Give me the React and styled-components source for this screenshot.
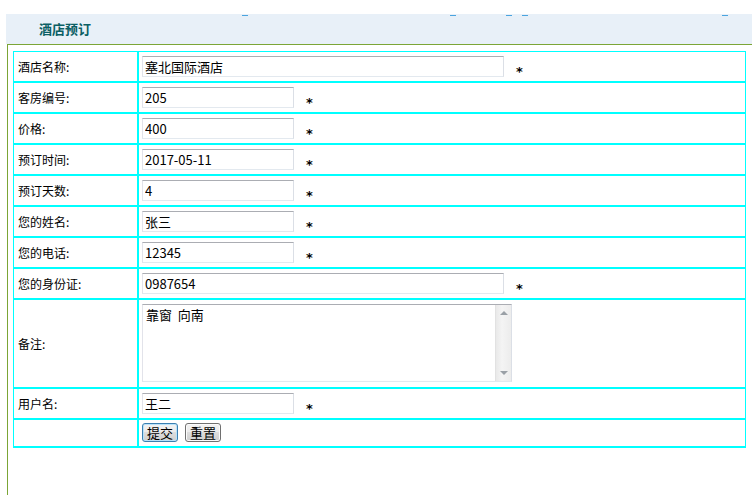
import React from "react";
import styled, { createGlobalStyle } from "styled-components";

const GlobalStyle = createGlobalStyle`
  html, body { margin: 0; padding: 0; background: #ffffff; }
  body { font-family: "Noto Sans CJK SC", "Noto Sans", sans-serif; color: #000; }
`;

const Page = styled.div`
  padding: 14px 0 0 6px;
  width: 746px;
`;

const Header = styled.div`
  position: relative;
  height: 30px;
  background: #e8f0f8;
  display: flex;
  align-items: center;
  padding-left: 33px;
  box-sizing: border-box;
`;

const Tick = styled.span`
  position: absolute;
  top: 1px;
  width: 6px;
  height: 1px;
  background: #4ba4df;
`;

const Title = styled.h1`
  margin: 0;
  font-size: 13px;
  font-weight: bold;
  line-height: 16px;
  color: #0b5f64;
`;

const Panel = styled.div`
  margin-left: 1px;
  border-top: 1px solid #7ba536;
  border-left: 1px solid #7ba536;
  padding: 6px 0 0 5px;
  min-height: 460px;
  box-sizing: border-box;
`;

const Table = styled.table`
  width: 733px;
  border-collapse: separate;
  border-spacing: 0;
  border: 1px solid #00ffff;
  table-layout: fixed;
`;

const LabelCell = styled.td`
  width: 119px;
  height: ${(p) => p.$h}px;
  padding: 0 0 0 4px;
  border-right: 2px solid #00ffff;
  border-bottom: ${(p) => (p.$last ? "1px" : "2px")} solid #00ffff;
  font-size: 12px;
  line-height: 14px;
  vertical-align: middle;
  white-space: nowrap;
`;

const ValueCell = styled.td`
  height: ${(p) => p.$h}px;
  padding: 0 0 0 3px;
  border-bottom: ${(p) => (p.$last ? "1px" : "2px")} solid #00ffff;
  vertical-align: top;
`;

const Field = styled.div`
  display: flex;
  align-items: flex-start;
  padding-top: 4px;
`;

const TextInput = styled.input`
  box-sizing: border-box;
  width: ${(p) => p.$w}px;
  height: 21px;
  margin: 0;
  padding: 0 2px;
  border: 1px solid;
  border-color: #abadb3 #dbdfe6 #e3e9ef #e2e3ea;
  font-family: "Noto Sans CJK SC", sans-serif;
  font-size: 13px;
  line-height: 19px;
  color: #000;
  background: #fff;
  outline: none;
`;

const Star = styled.span`
  margin: 10px 0 0 12px;
  font-family: "DejaVu Sans", sans-serif;
  font-size: 13px;
  line-height: 12px;
  font-weight: bold;
`;

const AreaBox = styled.div`
  margin-top: 4px;
  width: 370px;
  height: 78px;
  box-sizing: border-box;
  display: flex;
  border: 1px solid;
  border-color: #abadb3 #dbdfe6 #e3e9ef #e2e3ea;
`;

const Area = styled.textarea`
  flex: 1;
  margin: 0;
  padding: 2px 3px;
  border: none;
  resize: none;
  outline: none;
  overflow: hidden;
  font-family: "Noto Sans CJK SC", sans-serif;
  font-size: 13px;
  line-height: 16px;
  color: #000;
  white-space: pre-wrap;
`;

const ScrollTrack = styled.div`
  width: 16px;
  background: linear-gradient(to right, #e9e9e9, #f4f4f4 40%, #ececec);
  border-left: 1px solid #e2e2e2;
  display: flex;
  flex-direction: column;
  justify-content: space-between;
  align-items: center;
  padding: 6px 0;
  box-sizing: border-box;
`;

const Arrow = styled.span`
  width: 0;
  height: 0;
  border-left: 4px solid transparent;
  border-right: 4px solid transparent;
  ${(p) =>
    p.$up
      ? "border-bottom: 4px solid #9aa0a6;"
      : "border-top: 4px solid #9aa0a6;"}
`;

const ButtonRow = styled.div`
  display: flex;
  gap: 7px;
  padding-top: 3px;
`;

const Button = styled.button`
  height: 19px;
  margin: 0;
  padding: 0 4px;
  box-sizing: border-box;
  border: 1px solid ${(p) => (p.$focus ? "#3c7fb1" : "#707070")};
  border-radius: 3px;
  background: linear-gradient(#f2f2f2, #ebebeb 50%, #dddddd 50%, #cfcfcf);
  box-shadow: ${(p) => (p.$focus ? "inset 0 0 0 1px #b8e2fa" : "inset 0 0 0 1px #fbfbfb")};
  font-family: "Noto Sans CJK SC", sans-serif;
  font-size: 13px;
  line-height: 15px;
  color: #000;
`;

const rows = [
  { label: "酒店名称:", value: "塞北国际酒店", w: 362 },
  { label: "客房编号:", value: "205", w: 152 },
  { label: "价格:", value: "400", w: 152 },
  { label: "预订时间:", value: "2017-05-11", w: 152 },
  { label: "预订天数:", value: "4", w: 152 },
  { label: "您的姓名:", value: "张三", w: 152 },
  { label: "您的电话:", value: "12345", w: 152 },
  { label: "您的身份证:", value: "0987654", w: 362 },
];

export default function App() {
  return (
    <>
      <GlobalStyle />
      <Page>
        <Header>
          {[236, 444, 500, 516, 716].map((x) => (
            <Tick key={x} style={{ left: x }} />
          ))}
          <Title>酒店预订</Title>
        </Header>
        <Panel>
          <Table>
            <tbody>
              {rows.map((r) => (
                <tr key={r.label}>
                  <LabelCell $h={29}>{r.label}</LabelCell>
                  <ValueCell $h={29}>
                    <Field>
                      <TextInput $w={r.w} defaultValue={r.value} />
                      <Star>*</Star>
                    </Field>
                  </ValueCell>
                </tr>
              ))}
              <tr>
                <LabelCell $h={87}>备注:</LabelCell>
                <ValueCell $h={87}>
                  <AreaBox>
                    <Area defaultValue={"靠窗  向南"} />
                    <ScrollTrack>
                      <Arrow $up />
                      <Arrow />
                    </ScrollTrack>
                  </AreaBox>
                </ValueCell>
              </tr>
              <tr>
                <LabelCell $h={29}>用户名:</LabelCell>
                <ValueCell $h={29}>
                  <Field>
                    <TextInput $w={152} defaultValue="王二" />
                    <Star>*</Star>
                  </Field>
                </ValueCell>
              </tr>
              <tr>
                <LabelCell $h={26} $last />
                <ValueCell $h={26} $last>
                  <ButtonRow>
                    <Button $focus type="button">提交</Button>
                    <Button type="button">重置</Button>
                  </ButtonRow>
                </ValueCell>
              </tr>
            </tbody>
          </Table>
        </Panel>
      </Page>
    </>
  );
}
